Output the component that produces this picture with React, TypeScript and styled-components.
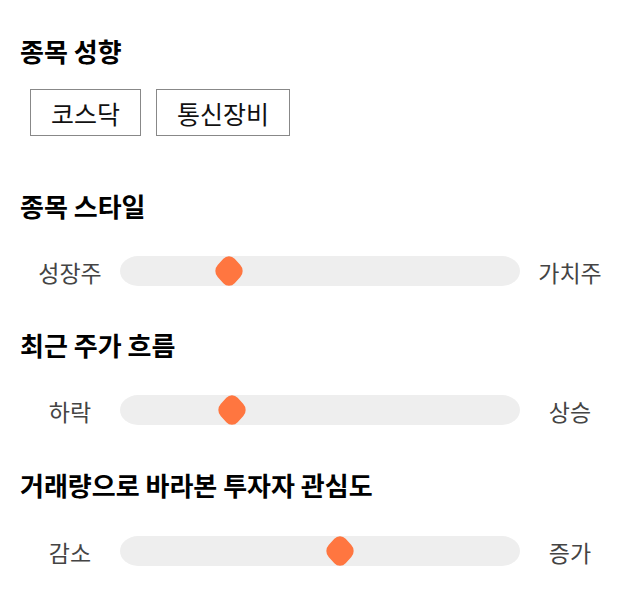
import React from "react";
import styled, { createGlobalStyle } from "styled-components";

interface SliderProps {
  left: string;
  right: string;
  value: number;
}

const Slider = ({ left, right, value }: SliderProps) => {
  return (
    <SliderRow>
      <SideLabel>{left}</SideLabel>
      <Track>
        <Thumb style={{ left: `${value}%` }} />
      </Track>
      <SideLabel>{right}</SideLabel>
    </SliderRow>
  );
};

const App = () => {
  return (
    <Page>
      <GlobalStyle />
      <Section $after={55}>
        <Heading $gap={23}>종목 성향</Heading>
        <TagRow>
          <Tag>코스닥</Tag>
          <Tag>통신장비</Tag>
        </TagRow>
      </Section>
      <Section $after={46}>
        <Heading $gap={33}>종목 스타일</Heading>
        <Slider left="성장주" right="가치주" value={27.3} />
      </Section>
      <Section $after={47}>
        <Heading $gap={33}>최근 주가 흐름</Heading>
        <Slider left="하락" right="상승" value={28} />
      </Section>
      <Section $after={0}>
        <Heading $gap={34}>거래량으로 바라본 투자자 관심도</Heading>
        <Slider left="감소" right="증가" value={55.1} />
      </Section>
    </Page>
  );
};

export default App;

const GlobalStyle = createGlobalStyle`
  body {
    margin: 0;
    background: #fff;
    font-family: "Noto Sans CJK KR", "Noto Sans", sans-serif;
  }
`;

const Page = styled.div`
  width: 640px;
  box-sizing: border-box;
  padding: 36px 20px 20px;
`;

const Section = styled.section<{ $after: number }>`
  margin-bottom: ${(p) => p.$after}px;
`;

const Heading = styled.h3<{ $gap: number }>`
  margin: 0 0 ${(p) => p.$gap}px;
  font-size: 26px;
  line-height: 30px;
  font-weight: 700;
  color: #000;
`;

const TagRow = styled.div`
  display: flex;
  gap: 15px;
  padding-left: 10px;
`;

const Tag = styled.div`
  height: 47px;
  box-sizing: border-box;
  padding: 0 20px;
  border: 1px solid #888;
  display: flex;
  align-items: center;
  justify-content: center;
  font-size: 25px;
  color: #111;
`;

const SliderRow = styled.div`
  display: grid;
  grid-template-columns: 100px 400px 100px;
  align-items: center;
  height: 30px;
`;

const SideLabel = styled.span`
  text-align: center;
  font-size: 23px;
  color: #444;
  line-height: 30px;
  padding-top: 3px;
`;

const Track = styled.div`
  position: relative;
  height: 30px;
  background: #eeeeee;
  border-radius: 18px / 15px;
`;

const Thumb = styled.div`
  position: absolute;
  top: 50%;
  width: 24px;
  height: 24px;
  border-radius: 8px;
  background: #ff7640;
  transform: translate(-50%, -50%) scaleY(1.08) rotate(45deg);
`;
